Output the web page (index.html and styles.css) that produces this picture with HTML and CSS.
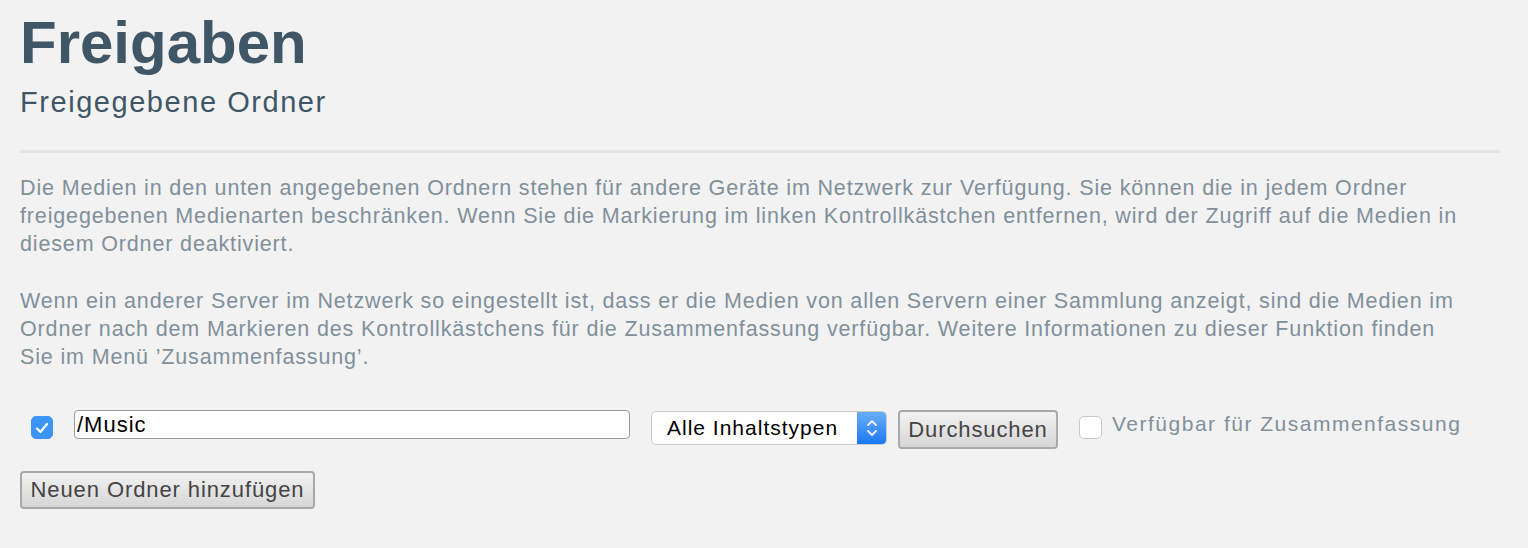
FILE: index.html
```html
<!DOCTYPE html>
<html lang="de">
<head>
  <meta charset="UTF-8">
  <title>Freigaben</title>
  <link rel="stylesheet" href="styles.css">
</head>
<body>
  <div class="page">
    <h1>Freigaben</h1>
    <h2>Freigegebene Ordner</h2>
    <hr class="divider">

    <p class="info">Die Medien in den unten angegebenen Ordnern stehen für andere Geräte im Netzwerk zur Verfügung. Sie können die in jedem Ordner freigegebenen Medienarten beschränken. Wenn Sie die Markierung im linken Kontrollkästchen entfernen, wird der Zugriff auf die Medien in diesem Ordner deaktiviert.</p>
    <p class="info">Wenn ein anderer Server im Netzwerk so eingestellt ist, dass er die Medien von allen Servern einer Sammlung anzeigt, sind die Medien im Ordner nach dem Markieren des Kontrollkästchens für die Zusammenfassung verfügbar. Weitere Informationen zu dieser Funktion finden Sie&nbsp;im Menü ’Zusammenfassung’.</p>

    <div class="folder-row">
      <span class="check checked">
        <svg width="14" height="12" viewBox="0 0 14 12"><path d="M2 6.5 L5.5 10 L12 2" fill="none" stroke="#fff" stroke-width="2.2" stroke-linecap="round" stroke-linejoin="round"/></svg>
      </span>
      <input class="path" type="text" value="/Music">
      <div class="select">
        <span class="select-label">Alle Inhaltstypen</span>
        <span class="select-arrows">
          <svg width="12" height="20" viewBox="0 0 12 20"><path d="M2 7 L6 3 L10 7 M2 13 L6 17 L10 13" fill="none" stroke="#fff" stroke-width="1.8" stroke-linecap="round" stroke-linejoin="round"/></svg>
        </span>
      </div>
      <button class="btn search">Durchsuchen</button>
      <label class="aggr">
        <span class="check"></span>
        <span>Verfügbar für Zusammenfassung</span>
      </label>
    </div>

    <button class="btn add">Neuen Ordner hinzufügen</button>
  </div>
</body>
</html>
```

FILE: styles.css
```css
* {
  box-sizing: border-box;
}

html, body {
  margin: 0;
  background: #f2f2f2;
}

body {
  font-family: "Liberation Sans", Arial, sans-serif;
}

.page {
  padding: 8px 28px 0 20px;
}

h1 {
  margin: 0;
  font-size: 60px;
  line-height: 70px;
  font-weight: bold;
  color: #3f5666;
}

h2 {
  margin: 7px 0 0 0;
  font-size: 29px;
  line-height: 34px;
  font-weight: normal;
  letter-spacing: 1.55px;
  color: #3f5666;
}

.divider {
  border: none;
  height: 3px;
  background: #e4e4e4;
  margin: 31px 0 21px 0;
}

.info {
  margin: 0 0 29px 0;
  font-size: 21.5px;
  line-height: 28px;
  letter-spacing: 0.85px;
  color: #80909b;
}

/* folder row: each control sits on its own top offset, like the native widgets */
.folder-row {
  display: flex;
  align-items: flex-start;
  margin-top: 39px;
}

.check {
  display: inline-flex;
  align-items: center;
  justify-content: center;
  flex-shrink: 0;
  width: 23px;
  height: 23px;
  border-radius: 5px;
  border: 1px solid #c8c8c8;
  background: #fff;
}

.check.checked {
  margin: 6px 0 0 11px;
  width: 22px;
  background: #3b95f5;
  border-color: #3b95f5;
}

.path {
  margin-left: 21px;
  width: 556px;
  height: 29px;
  border: 1px solid #9b9b9b;
  border-radius: 4px;
  padding: 0 2px;
  font-family: "Liberation Sans", Arial, sans-serif;
  font-size: 22px;
  letter-spacing: 1px;
  color: #000;
  background: #fff;
}

.select {
  display: flex;
  margin: 1px 0 0 21px;
  width: 236px;
  height: 34px;
  border: 1px solid #c9c9c9;
  border-radius: 5px;
  background: #fff;
  overflow: hidden;
}

.select-label {
  flex: 1;
  padding-left: 15px;
  font-size: 21px;
  line-height: 32px;
  letter-spacing: 1px;
  color: #000;
}

.select-arrows {
  width: 29px;
  display: flex;
  align-items: center;
  justify-content: center;
  background: linear-gradient(#6aaefc, #1a78f2);
}

.btn {
  font-family: "Liberation Sans", Arial, sans-serif;
  font-size: 22px;
  letter-spacing: 0.9px;
  color: #444;
  background: linear-gradient(#f2f2f2, #d6d6d6);
  border: 2px solid #a9a9a9;
  border-radius: 4px;
  padding: 0 6px;
}

.search {
  margin-left: 11px;
  width: 160px;
  height: 39px;
}

.aggr {
  display: flex;
  align-items: flex-start;
  margin: 2px 0 0 21px;
  font-size: 21px;
  line-height: 24px;
  letter-spacing: 1.5px;
  color: #80909b;
}

.aggr .check {
  margin: 4px 10px 0 0;
}

.add {
  margin-top: 22px;
  width: 295px;
  height: 38px;
}
```
